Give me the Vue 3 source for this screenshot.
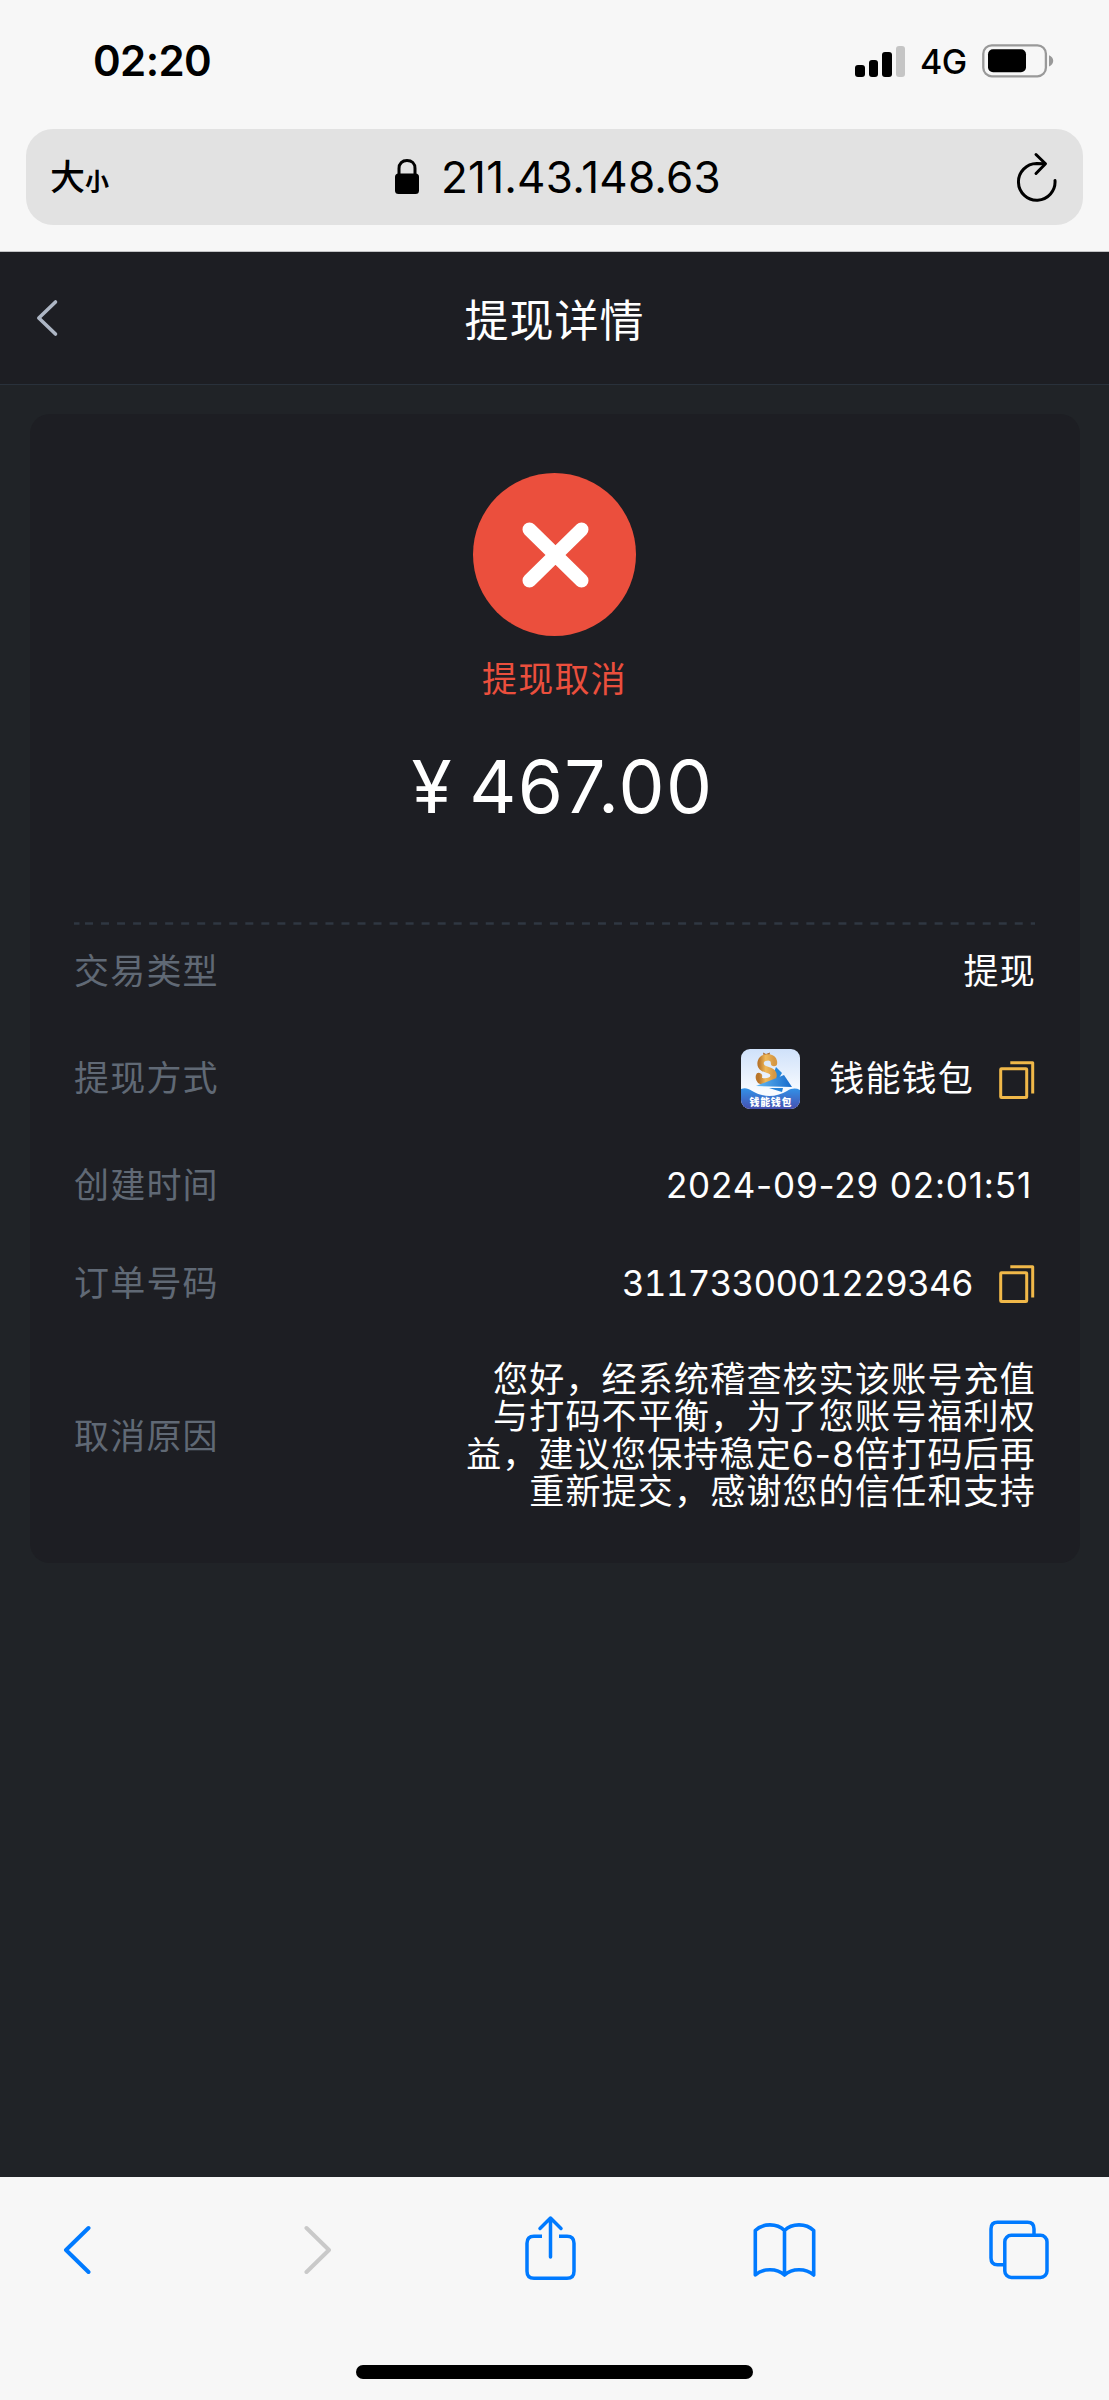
<script setup>
import { ref } from 'vue'

const signal = [12, 17, 25, 31]
const dashes = '5.5 5.5 ' + Array(59).fill('8 8.03').join(' ') + ' 6 40'

const rows = ref([
  { label: '交易类型', value: '提现', height: 92 },
  { label: '提现方式', value: '钱能钱包', height: 122, logo: true, copy: true },
  { label: '创建时间', value: '2024-09-29 02:01:51', height: 92, kind: 'date' },
  { label: '订单号码', value: '3117330001229346', height: 103, kind: 'number', copy: true },
  {
    label: '取消原因',
    value: '您好，经系统稽查核实该账号充值与打码不平衡，为了您账号福利权益，建议您保持稳定6-8倍打码后再重新提交，感谢您的信任和支持',
    height: 203,
    kind: 'reason'
  }
])
</script>

<template>
  <div class="phone">
    <header class="browser-top">
      <div class="status">
        <span class="clock">02:20</span>
        <div class="status-right">
          <div class="signal">
            <i v-for="(h, i) in signal" :key="i" :class="{ off: i === 3 }" :style="{ height: h + 'px' }"></i>
          </div>
          <span class="network">4G</span>
          <svg class="battery" width="72" height="34" viewBox="0 0 72 34">
            <rect x="1.3" y="1.3" width="62.6" height="31" rx="8.5" fill="none" stroke="#999" stroke-width="2.3" />
            <rect x="6" y="5.3" width="38" height="23" rx="5" fill="#000" />
            <path d="M67 11.2c2.6 1 4.2 3 4.200 5.600s-1.600 4.600-4.200 5.600z" fill="#999" />
          </svg>
        </div>
      </div>
      <div class="address">
        <span class="size"><b>大</b><small>小</small></span>
        <div class="host">
          <svg width="26" height="36" viewBox="0 0 26 36">
            <path d="M5 16V9.500C5 4.500 8.300 1.600 13 1.600s8 2.900 8 7.900V16" fill="none" stroke="#000" stroke-width="3" />
            <rect x="1" y="14.500" width="24" height="20.500" rx="3.500" fill="#000" />
          </svg>
          <span>211.43.148.63</span>
        </div>
        <svg class="reload" width="42" height="50" viewBox="0 0 42 50" fill="none" stroke="#000" stroke-width="3" stroke-linecap="round" stroke-linejoin="round">
          <path d="M39 28.500A18.300 18.300 0 1 1 20.700 11.600L28.500 11.800" />
          <path d="M20 2.500L29.500 11.800L20 21.500" />
        </svg>
      </div>
    </header>

    <main class="page">
      <div class="nav">
        <svg class="nav-back" width="24" height="38" viewBox="0 0 24 38">
          <path d="M20.500 3L3.800 19L20.500 35" fill="none" stroke="#adb6c4" stroke-width="3.600" stroke-linecap="round" stroke-linejoin="round" />
        </svg>
        <h1>提现详情</h1>
      </div>

      <section class="card">
        <svg class="cross" width="163" height="163" viewBox="0 0 163 163">
          <circle cx="81.500" cy="81.500" r="81.500" fill="#eb4f3d" />
          <path d="M56.500 56.500L108.500 107.500M108.500 56.500L56.500 107.500" stroke="#fff" stroke-width="14" stroke-linecap="round" />
        </svg>
        <div class="state">提现取消</div>
        <div class="amount"><span class="yen">¥</span><span>467.00</span></div>
        <svg class="divider" width="961" height="3" viewBox="0 0 961 3">
          <path d="M0 1.500H961" stroke="#2f3742" stroke-width="2.600" :stroke-dasharray="dashes" />
        </svg>

        <div v-for="row in rows" :key="row.label" class="row" :style="{ height: row.height + 'px' }">
          <span class="label">{{ row.label }}</span>
          <div class="value" :class="row.kind">
            <svg v-if="row.logo" class="logo" width="59" height="60" viewBox="0 0 59 60">
              <defs>
                <clipPath id="logo-clip"><rect width="59" height="60" rx="9" /></clipPath>
                <linearGradient id="sky" x1="0" y1="0" x2="0" y2="1">
                  <stop offset="0" stop-color="#cfe1fa" />
                  <stop offset=".7" stop-color="#f8fbff" />
                </linearGradient>
                <linearGradient id="sea" x1="0" y1="0" x2="0" y2="1">
                  <stop offset="0" stop-color="#3292e8" />
                  <stop offset="1" stop-color="#4650b0" />
                </linearGradient>
                <linearGradient id="gold" x1="0" y1="0" x2="1" y2="0">
                  <stop offset="0" stop-color="#b9752a" />
                  <stop offset=".45" stop-color="#f0b95a" />
                  <stop offset="1" stop-color="#d69843" />
                </linearGradient>
                <linearGradient id="plane" x1="0" y1="0" x2="1" y2="0">
                  <stop offset="0" stop-color="#63b8f2" />
                  <stop offset="1" stop-color="#176bcb" />
                </linearGradient>
              </defs>
              <g clip-path="url(#logo-clip)">
                <rect width="59" height="60" fill="url(#sky)" />
                <path d="M35 18L41 24L38 29L30 31Z" fill="#2487db" />
                <path d="M22 3.500l3 1.500 4-1.500-1 5h-5z" fill="#a9672c" />
                <path d="M33 14C33 9 29 8 25.500 8.500C19 9 18 16 22 19C26 21.500 33 21 32.500 27C32 32 25 33 20 32C18.500 31.500 17.500 29 18 27" fill="none" stroke="url(#gold)" stroke-width="6.400" stroke-linecap="round" />
                <path d="M15 37L43 26L51 38Z" fill="url(#plane)" />
                <path d="M28 39H42L41 43Z" fill="#2482d8" />
                <path d="M0 40C7 37 11 43 19 45.500C29 49 39 46 46 42C51 39 55 39 59 41V60H0Z" fill="url(#sea)" />
                <text x="29.500" y="56.500" text-anchor="middle" textLength="42" class="logo-text">钱能钱包</text>
              </g>
            </svg>
            <span class="text">{{ row.value }}</span>
            <svg v-if="row.copy" class="copy" width="36" height="38" viewBox="0 0 36 38" fill="none" stroke="#f0b849" stroke-width="3">
              <rect x="1.700" y="7.700" width="26" height="28.800" rx=".8" />
              <path d="M11.300 1.800H33.700V32.500" stroke-linejoin="round" />
            </svg>
          </div>
        </div>
      </section>
    </main>

    <footer class="toolbar">
      <div class="tools">
        <svg width="28" height="50" viewBox="0 0 28 50">
          <path d="M25.500 3L3 25L25.500 47" fill="none" stroke="#007aff" stroke-width="4" stroke-linecap="round" stroke-linejoin="round" />
        </svg>
        <svg class="forward" width="28" height="50" viewBox="0 0 28 50">
          <path d="M2.500 3L25 25L2.500 47" fill="none" stroke="#c9c9c9" stroke-width="4" stroke-linecap="round" stroke-linejoin="round" />
        </svg>
        <svg class="share" width="51" height="66" viewBox="0 0 51 66" fill="none" stroke="#007aff" stroke-width="3.500">
          <path d="M17 21.200H9Q2 21.200 2 28.200V56.300Q2 63.300 9 63.300H42Q49 63.300 49 56.300V28.200Q49 21.200 42 21.200H34" />
          <path d="M25.500 42V3M15 13.500L25.500 3L36 13.500" stroke-linecap="round" stroke-linejoin="round" />
        </svg>
        <svg class="book" width="63" height="56" viewBox="0 0 63 56" fill="none" stroke="#007aff" stroke-width="3.600" stroke-linejoin="round">
          <path d="M31.500 8.500C24 1 10 1 2.300 8.500V53C10 46 24 46 31.500 53C39 46 53 46 60.700 53V8.500C53 1 39 1 31.500 8.500V53" />
        </svg>
        <svg class="tabs" width="60" height="60" viewBox="0 0 60 60" fill="none" stroke="#007aff" stroke-width="3.500">
          <path d="M45 15V9Q45 2.300 38.500 2.300H8.500Q2 2.300 2 9V38Q2 44.800 8.500 44.800H16" />
          <rect x="15.800" y="15.300" width="42.200" height="42.200" rx="6.500" />
        </svg>
      </div>
      <div class="home"></div>
    </footer>
  </div>
</template>

<style>
body {
  margin: 0;
  background: #202327;
}
</style>

<style scoped>
.phone {
  display: flex;
  flex-direction: column;
  width: 1109px;
  height: 2400px;
  overflow: hidden;
  background: #202327;
  font-family: Inter, "Noto Sans CJK SC", sans-serif;
  color: #000;
}
svg {
  display: block;
  flex: none;
}
.browser-top {
  box-sizing: border-box;
  flex: none;
  height: 252px;
  background: #f7f7f7;
  border-bottom: 1px solid #c2c3c5;
}
.status {
  box-sizing: border-box;
  height: 129px;
  padding: 44px 55px 0 93px;
  display: flex;
  justify-content: space-between;
}
.clock {
  font-size: 42px;
  font-weight: 600;
  line-height: 34px;
  letter-spacing: -0.6px;
}
.status-right {
  display: flex;
  height: 34px;
  align-items: center;
}
.signal {
  display: flex;
  align-items: flex-end;
  gap: 4px;
  height: 31px;
  margin-right: 15px;
}
.signal i {
  width: 9.4px;
  border-radius: 3px;
  background: #000;
}
.signal .off {
  background: #c5c5c5;
}
.network {
  width: 46px;
  margin: 2px 16px 0 0;
  font-size: 34px;
  font-weight: 500;
  line-height: 36px;
  letter-spacing: -0.6px;
  white-space: nowrap;
}
.address {
  box-sizing: border-box;
  height: 96px;
  margin: 0 26px;
  padding: 0 25px 0 24px;
  border-radius: 27px;
  background: #e2e2e2;
  display: grid;
  grid-template-columns: 66px 1fr 42px;
  align-items: center;
}
.size {
  display: flex;
  align-items: baseline;
  margin-top: 4px;
  line-height: 40px;
}
.size b {
  font-size: 35px;
  font-weight: 500;
}
.size small {
  font-size: 24px;
  font-weight: 700;
}
.host {
  display: flex;
  align-items: center;
  justify-content: center;
  gap: 21px;
  margin-right: 17px;
  font-size: 44px;
  line-height: 50px;
  letter-spacing: 0.2px;
}
.page {
  flex: none;
  height: 1925px;
  display: flow-root;
}
.nav {
  box-sizing: border-box;
  height: 133px;
  padding: 0 35px;
  display: grid;
  grid-template-columns: 60px 1fr 60px;
  align-items: center;
  background: #1d1e23;
  border-bottom: 1px solid #29313b;
}
h1 {
  margin: 5px 0 0;
  font-size: 44px;
  font-weight: 400;
  line-height: 50px;
  letter-spacing: 1px;
  text-align: center;
  color: #fff;
}
.card {
  box-sizing: border-box;
  width: 1050px;
  height: 1149px;
  margin: 29px 0 0 30px;
  padding: 59px 45px 0 44px;
  border-radius: 20px;
  background: #1d1e23;
  display: flex;
  flex-direction: column;
}
.cross {
  align-self: center;
}
.state {
  margin-top: 23px;
  font-size: 35px;
  line-height: 40px;
  letter-spacing: 1.2px;
  text-align: center;
  color: #eb4f3d;
}
.amount {
  display: flex;
  justify-content: center;
  gap: 16px;
  height: 90px;
  margin: 43px 0 90px 16px;
  font-size: 73px;
  line-height: 90px;
  letter-spacing: 1.4px;
  color: #fff;
}
.row {
  display: flex;
  align-items: center;
  justify-content: space-between;
  font-size: 35px;
  line-height: 40px;
  letter-spacing: 1.2px;
}
.label {
  color: #606975;
}
.value {
  display: flex;
  align-items: center;
  margin-right: -1px;
  color: #fff;
}
.logo {
  margin: 2px 29px 0 0;
}
.logo-text {
  font-size: 10px;
  font-weight: 900;
  letter-spacing: 0;
  fill: #fff;
}
.copy {
  margin: 3px 1px 0 25px;
}
.date {
  letter-spacing: 0.85px;
  margin-right: 3px;
}
.number {
  letter-spacing: -0.75px;
  font-variant-numeric: tabular-nums;
}
.number .copy {
  margin-left: 26px;
}
.reason .text {
  width: 572px;
  text-align: right;
  line-height: 37.5px;
}
.toolbar {
  box-sizing: border-box;
  flex: none;
  height: 223px;
  background: #f7f7f7;
  display: flex;
  flex-direction: column;
  align-items: center;
}
.tools {
  box-sizing: border-box;
  width: 100%;
  height: 146px;
  padding-left: 63px;
  display: flex;
  align-items: center;
}
.forward {
  margin-left: 213px;
}
.share {
  margin: 0 0 4px 193px;
}
.book {
  margin-left: 177px;
}
.tabs {
  margin-left: 173px;
}
.home {
  width: 397px;
  height: 14px;
  margin-top: 42px;
  border-radius: 7px;
  background: #000;
}
</style>
